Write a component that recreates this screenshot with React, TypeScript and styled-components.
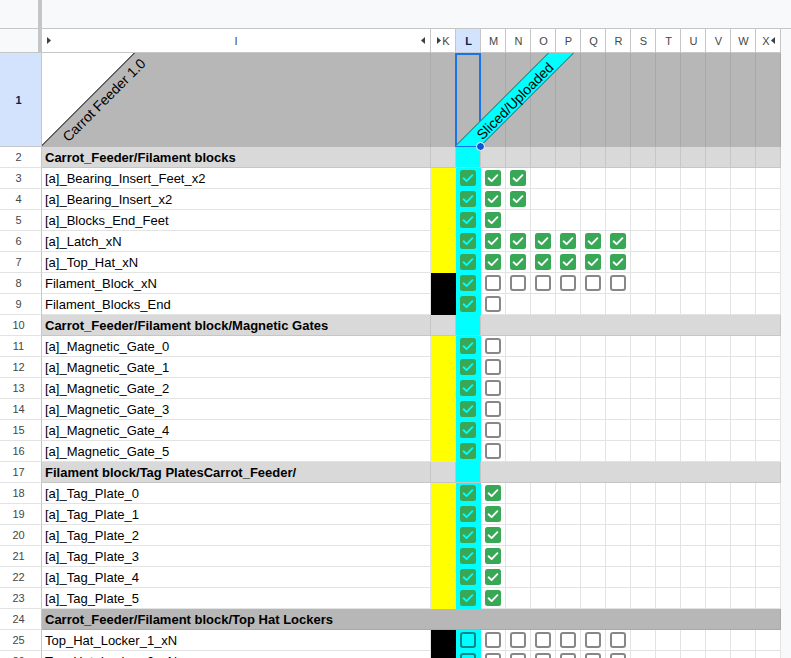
import React from 'react';
import styled, { createGlobalStyle } from 'styled-components';

const GRID = '42px 389px repeat(14, 25px) 1fr';
const LINE = '#e2e3e3';
const HEAD_LINE = '#c4c7c5';
const GROUP_LINE = '#c6c6c6';
const GREEN = '#38a856';
const CYAN = '#00ffff';
const YELLOW = '#ffff00';
const LIGHT_GRAY = '#d9d9d9';
const DARK_GRAY = '#b7b7b7';
const COLS = ['K', 'L', 'M', 'N', 'O', 'P', 'Q', 'R', 'S', 'T', 'U', 'V', 'W', 'X'];

const GlobalStyle = createGlobalStyle`
  html, body { margin: 0; padding: 0; background: #f8f9fa; overflow: hidden; }
  body { font-family: "Liberation Sans", Arial, sans-serif; }
  *, *::before, *::after { box-sizing: border-box; }
`;

const Sheet = styled.div`
  width: 791px;
  height: 658px;
  overflow: hidden;
  background: #f8f9fa;
  display: flex;
  flex-direction: column;
`;

/* ---------- frozen header area ---------- */
const Header = styled.div`
  display: grid;
  grid-template-columns: 38px 4px 389px repeat(14, 25px) 1fr;
  grid-template-rows: 29px 24px;
  flex-shrink: 0;
`;

const Strip = styled.div<{ $col: string; $row: number }>`
  grid-column: ${p => p.$col};
  grid-row: ${p => p.$row};
  background: #f8f9fa;
  border-bottom: 1px solid ${HEAD_LINE};
`;

const FreezeBar = styled.div`
  grid-column: 2;
  grid-row: 1 / span 2;
  background: #c4c7c5;
`;

const ColHead = styled.div<{ $active?: boolean; $spread?: boolean }>`
  grid-row: 2;
  display: flex;
  align-items: center;
  justify-content: ${p => (p.$spread ? 'space-between' : 'center')};
  gap: 1px;
  padding: ${p => (p.$spread ? '0 5px 0 5px' : '0 0 0 1px')};
  background: ${p => (p.$active ? '#d3e3fd' : '#ffffff')};
  border-right: 1px solid ${HEAD_LINE};
  border-bottom: 1px solid ${HEAD_LINE};
  font-size: 11px;
  color: ${p => (p.$active ? '#0b1f4a' : '#444746')};
  font-weight: ${p => (p.$active ? 700 : 400)};
`;

const HeadFiller = styled.div`
  grid-row: 2;
  background: #f8f9fa;
`;

/* ---------- body rows ---------- */
const Body = styled.div`
  display: flex;
  flex-direction: column;
`;

const Row = styled.div<{ $h?: number }>`
  display: grid;
  grid-template-columns: ${GRID};
  height: ${p => p.$h ?? 21}px;
  flex-shrink: 0;
`;

const RowHead = styled.div<{ $active?: boolean }>`
  display: flex;
  align-items: center;
  justify-content: center;
  padding-right: 4px;
  background: ${p => (p.$active ? '#d3e3fd' : '#ffffff')};
  border-right: 1px solid ${HEAD_LINE};
  border-bottom: 1px solid ${p => (p.$active ? HEAD_LINE : LINE)};
  font-size: 11px;
  color: ${p => (p.$active ? '#0b1f4a' : '#444746')};
  font-weight: ${p => (p.$active ? 700 : 400)};
`;

const Cell = styled.div<{ $bg?: string; $line?: string }>`
  display: flex;
  align-items: center;
  justify-content: center;
  min-width: 0;
  background: ${p => p.$bg ?? '#ffffff'};
  border-right: 1px solid ${p => p.$line ?? LINE};
  border-bottom: 1px solid ${p => p.$line ?? LINE};
`;

const NameCell = styled.div<{ $bold?: boolean; $bg?: string; $line?: string }>`
  display: flex;
  align-items: center;
  padding: 1px 4px 0 3px;
  white-space: nowrap;
  overflow: visible;
  font-size: 13px;
  color: #000;
  font-weight: ${p => (p.$bold ? 700 : 400)};
  background: ${p => p.$bg ?? '#ffffff'};
  border-right: 1px solid ${p => p.$line ?? LINE};
  border-bottom: 1px solid ${p => p.$line ?? LINE};
`;

const Filler = styled.div`
  background: #f8f9fa;
`;

const Merged = styled.div<{ $span: number; $bg: string; $line: string }>`
  grid-column: span ${p => p.$span};
  display: flex;
  align-items: center;
  padding: 1px 4px 0 3px;
  white-space: nowrap;
  font-size: 13px;
  font-weight: 700;
  color: #000;
  background: ${p => p.$bg};
  border-right: 1px solid ${p => p.$line};
  border-bottom: 1px solid ${p => p.$line};
`;

/* ---------- row 1: angled headers ---------- */
const TitleCell = styled.div`
  position: relative;
  background: linear-gradient(
    135deg,
    #ffffff 0,
    #ffffff 65px,
    #5f5f5f 65px,
    #5f5f5f 66.3px,
    ${DARK_GRAY} 66.3px
  );
  border-right: 1px solid #acacac;
  border-bottom: 1px solid ${DARK_GRAY};
`;

const AngledText = styled.span<{ $x: number; $y: number }>`
  position: absolute;
  left: ${p => p.$x}px;
  top: ${p => p.$y}px;
  transform: translate(-50%, -50%) rotate(-45deg);
  white-space: nowrap;
  font-size: 14px;
  line-height: 16px;
  color: #000;
  z-index: 3;
`;

const HeadGray = styled.div`
  position: relative;
  background: ${DARK_GRAY};
  border-right: 1px solid #a9a9a9;
  border-bottom: 1px solid ${DARK_GRAY};
`;

const Band = styled.div`
  position: absolute;
  left: -1px;
  top: 0;
  width: 26px;
  height: 93px;
  background: ${CYAN};
  border-left: 1px solid #4a4a4a;
  border-right: 1px solid #4a4a4a;
  transform-origin: 0 100%;
  transform: skewX(-45deg);
  z-index: 2;
`;

const Selection = styled.div`
  position: absolute;
  left: -1px;
  top: 0;
  width: 26px;
  height: 94px;
  border: 2px solid #1a73e8;
  z-index: 1;
`;

const Handle = styled.div`
  position: absolute;
  left: 20px;
  top: 89px;
  width: 9px;
  height: 9px;
  border-radius: 50%;
  background: #0b57d0;
  border: 1px solid #ffffff;
  z-index: 4;
`;

/* ---------- small drawings ---------- */
const Tri = ({ dir }: { dir: 'left' | 'right' }) => (
  <svg width="4" height="7" viewBox="0 0 4 7" aria-hidden="true">
    <path d={dir === 'right' ? 'M0 0 L4 3.5 L0 7 Z' : 'M4 0 L0 3.5 L4 7 Z'} fill="#3c4043" />
  </svg>
);

const CheckBox = ({ checked, mark }: { checked: boolean; mark: string }) =>
  checked ? (
    <svg width="16" height="16" viewBox="0 0 16 16" aria-hidden="true">
      <rect x="0" y="0" width="16" height="16" rx="2.5" fill={GREEN} />
      <path
        d="M3.6 8.3 L6.6 11.1 L12.4 5.2"
        fill="none"
        stroke={mark}
        strokeWidth="1.9"
        strokeLinecap="round"
        strokeLinejoin="round"
      />
    </svg>
  ) : (
    <svg width="16" height="16" viewBox="0 0 16 16" aria-hidden="true">
      <rect x="1" y="1" width="14" height="14" rx="2" fill="none" stroke="rgba(0,0,0,0.47)" strokeWidth="2" />
    </svg>
  );

/* ---------- data ---------- */
type Kind = 'item' | 'group' | 'dark';
interface RowData {
  n: number;
  kind: Kind;
  label: string;
  k?: string;
  l?: 'x' | 'o';
  marks?: string; // M.. : x checked, o unchecked, space none
  merged?: boolean;
}

const Y = YELLOW;
const B = '#000000';

const ROWS: RowData[] = [
  { n: 2, kind: 'group', label: 'Carrot_Feeder/Filament blocks' },
  { n: 3, kind: 'item', label: '[a]_Bearing_Insert_Feet_x2', k: Y, l: 'x', marks: 'xx' },
  { n: 4, kind: 'item', label: '[a]_Bearing_Insert_x2', k: Y, l: 'x', marks: 'xx' },
  { n: 5, kind: 'item', label: '[a]_Blocks_End_Feet', k: Y, l: 'x', marks: 'x' },
  { n: 6, kind: 'item', label: '[a]_Latch_xN', k: Y, l: 'x', marks: 'xxxxxx' },
  { n: 7, kind: 'item', label: '[a]_Top_Hat_xN', k: Y, l: 'x', marks: 'xxxxxx' },
  { n: 8, kind: 'item', label: 'Filament_Block_xN', k: B, l: 'x', marks: 'oooooo' },
  { n: 9, kind: 'item', label: 'Filament_Blocks_End', k: B, l: 'x', marks: 'o' },
  { n: 10, kind: 'group', label: 'Carrot_Feeder/Filament block/Magnetic Gates', merged: true },
  ...[0, 1, 2, 3, 4, 5].map(i => ({
    n: 11 + i,
    kind: 'item' as Kind,
    label: `[a]_Magnetic_Gate_${i}`,
    k: Y,
    l: 'x' as const,
    marks: 'o',
  })),
  { n: 17, kind: 'group', label: 'Filament block/Tag PlatesCarrot_Feeder/', merged: true },
  ...[0, 1, 2, 3, 4, 5].map(i => ({
    n: 18 + i,
    kind: 'item' as Kind,
    label: `[a]_Tag_Plate_${i}`,
    k: Y,
    l: 'x' as const,
    marks: 'x',
  })),
  { n: 24, kind: 'dark', label: 'Carrot_Feeder/Filament block/Top Hat Lockers' },
  { n: 25, kind: 'item', label: 'Top_Hat_Locker_1_xN', k: B, l: 'o', marks: 'oooooo' },
  { n: 26, kind: 'item', label: 'Top_Hat_Locker_2_xN', k: B, l: 'o', marks: 'oooooo' },
];

const DataRow = ({ r }: { r: RowData }) => {
  if (r.kind === 'dark') {
    return (
      <Row>
        <RowHead>{r.n}</RowHead>
        <Merged $span={15} $bg={DARK_GRAY} $line="#a9a9a9">
          {r.label}
        </Merged>
        <Filler />
      </Row>
    );
  }
  if (r.kind === 'group') {
    return (
      <Row>
        <RowHead>{r.n}</RowHead>
        <NameCell $bold $bg={LIGHT_GRAY} $line={GROUP_LINE}>
          {r.label}
        </NameCell>
        <Cell $bg={LIGHT_GRAY} $line={GROUP_LINE} />
        <Cell $bg={CYAN} $line={GROUP_LINE} />
        {r.merged ? (
          <Merged $span={12} $bg={LIGHT_GRAY} $line={GROUP_LINE} />
        ) : (
          COLS.slice(2).map(c => <Cell key={c} $bg={LIGHT_GRAY} $line={GROUP_LINE} />)
        )}
        <Filler />
      </Row>
    );
  }
  const marks = r.marks ?? '';
  return (
    <Row>
      <RowHead>{r.n}</RowHead>
      <NameCell>{r.label}</NameCell>
      <Cell $bg={r.k} $line={r.k} />
      <Cell $bg={CYAN} $line={CYAN}>
        <CheckBox checked={r.l === 'x'} mark={CYAN} />
      </Cell>
      {COLS.slice(2).map((c, i) => {
        const m = marks[i];
        return (
          <Cell key={c}>
            {m === 'x' && <CheckBox checked mark="#ffffff" />}
            {m === 'o' && <CheckBox checked={false} mark="#ffffff" />}
          </Cell>
        );
      })}
      <Filler />
    </Row>
  );
};

export default function App() {
  return (
    <>
      <GlobalStyle />
      <Sheet>
        <Header>
          <Strip $col="1" $row={1} />
          <FreezeBar />
          <Strip $col="3 / -1" $row={1} />
          <Strip $col="1" $row={2} />
          <ColHead $spread style={{ gridColumn: 3 }}>
            <Tri dir="right" />
            <span>I</span>
            <Tri dir="left" />
          </ColHead>
          {COLS.map(c => (
            <ColHead key={c} $active={c === 'L'}>
              {c === 'K' && <Tri dir="right" />}
              <span>{c}</span>
              {c === 'X' && <Tri dir="left" />}
            </ColHead>
          ))}
          <HeadFiller />
        </Header>
        <Body>
          <Row $h={94}>
            <RowHead $active>1</RowHead>
            <TitleCell>
              <AngledText $x={62} $y={47}>Carrot Feeder 1.0</AngledText>
            </TitleCell>
            {COLS.map(c =>
              c === 'L' ? (
                <HeadGray key={c}>
                  <Selection />
                  <Band />
                  <AngledText $x={59} $y={48}>Sliced/Uploaded</AngledText>
                  <Handle />
                </HeadGray>
              ) : (
                <HeadGray key={c} />
              )
            )}
            <Filler />
          </Row>
          {ROWS.map(r => (
            <DataRow key={r.n} r={r} />
          ))}
        </Body>
      </Sheet>
    </>
  );
}
